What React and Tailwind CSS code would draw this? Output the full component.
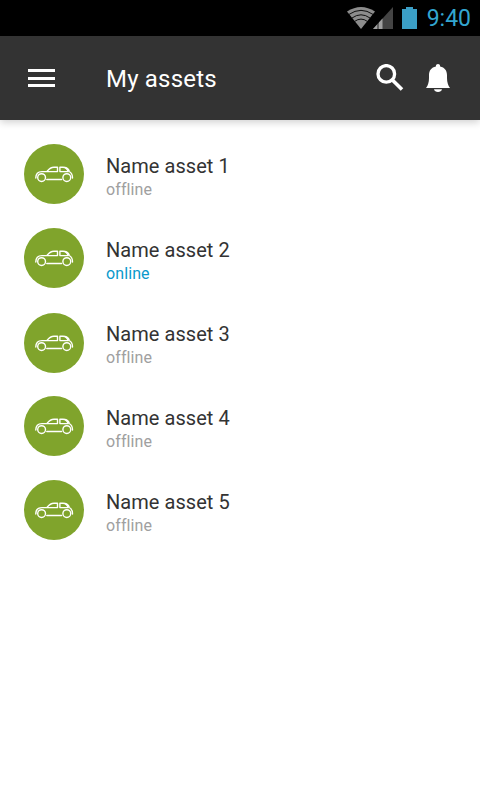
import clsx from 'clsx'

const assets = [
    { id: 1, name: 'Name asset 1', status: 'offline' },
    { id: 2, name: 'Name asset 2', status: 'online' },
    { id: 3, name: 'Name asset 3', status: 'offline' },
    { id: 4, name: 'Name asset 4', status: 'offline' },
    { id: 5, name: 'Name asset 5', status: 'offline' },
];

const App = () => {
    return (
        <div className="w-[480px] h-[800px] bg-white overflow-hidden font-['Roboto',sans-serif]">
            <StatusBar />
            <Header />
            <AssetList />
        </div>
    )
}

const StatusBar = () => {
    return (
        <div className="h-9 bg-black flex items-center justify-end pr-[9px]">
            <WifiIcon />
            <SignalIcon />
            <BatteryIcon />
            <span className="ml-[10px] pt-[2px] text-[23px] leading-[34px] text-[#33a6d0]">9:40</span>
        </div>
    )
}

const Header = () => {
    return (
        <header className="h-[84px] bg-[#333333] flex items-center pl-7 pr-[30px] shadow-[0_2px_8px_rgba(0,0,0,0.2)]">
            <button className="w-[27px] h-[18px] flex flex-col">
                <span className="h-[3px] bg-white" />
                <span className="mt-[5px] h-[3px] bg-white" />
                <span className="mt-[4px] h-[3px] bg-white" />
            </button>
            <h1 className="ml-[51px] pt-[2px] grow text-2xl text-white tracking-[0.2px]">My assets</h1>
            <SearchIcon />
            <BellIcon />
        </header>
    )
}

const AssetList = () => {
    return (
        <ul className="pt-6 px-6 flex flex-col gap-6">
            {assets.map((item) => (<AssetItem key={item.id} item={item} />))}
        </ul>
    )
}

const AssetItem = ({ item }) => {
    return (
        <li className="h-[60px] flex">
            <div className={clsx('size-[60px] rounded-full bg-[#80a42c]', item.id === 3 && 'mt-px')}>
                <CarIcon />
            </div>
            <div className="ml-[22px] pt-[10px]">
                <p className="text-[20px] leading-6 text-[#333333] tracking-[0.05px]">{item.name}</p>
                <p className={clsx('text-[16px] leading-6 tracking-[0.1px] [font-variant-ligatures:none]', item.status === 'online' ? 'text-[#0a99cc]' : 'text-[#a0a0a0]')}>
                    {item.status}
                </p>
            </div>
        </li>
    )
}

const CarIcon = () => {
    return (
        <svg className="size-[60px]" viewBox="0 0 60 60" fill="none" stroke="white" strokeWidth="1.4" strokeLinecap="round" strokeLinejoin="round">
            <circle cx="17.6" cy="33.6" r="3.9" />
            <circle cx="42.8" cy="33.6" r="3.9" />
            <path d="M22.8 35.5H37.6" />
            <path d="M11.8 34C11.8 30 14 27.6 18 27.6H33.5V23.2H30C27 23.2 25 24.8 23.2 27.2" />
            <path d="M35.9 23.2H39C41.6 23.2 43.2 24.6 44.2 27.6H35.9Z" />
            <path d="M41 23.4C43.5 23.8 44.8 25.6 45.3 27.5C47.4 28.6 48.5 30.6 48.5 34" />
        </svg>
    )
}

const SearchIcon = () => {
    return (
        <svg className="w-[28px] h-[28px]" viewBox="0 0 28 28" fill="none" stroke="white">
            <circle cx="10.3" cy="9.9" r="8.3" strokeWidth="3.3" />
            <path d="M16.4 16L26 25.6" strokeWidth="3.6" />
        </svg>
    )
}

const BellIcon = () => {
    return (
        <svg className="ml-[22px] w-6 h-[28px]" viewBox="0 0 24 28" fill="white">
            <path d="M12 0C13.2 0 14.1.9 14.1 2V2.4C18.6 3.2 21 6.5 21 11V14C21 18 22 21.5 24 24H0C2 21.5 3 18 3 14V11C3 6.5 5.4 3.2 9.9 2.4V2C9.9.9 10.8 0 12 0Z" />
            <path d="M8 25.2H16C15.6 27 14 28 12 28S8.4 27 8 25.2Z" />
        </svg>
    )
}

const WifiIcon = () => {
    return (
        <svg className="w-7 h-[22px]" viewBox="0 0 28 22">
            <path d="M0 4.5Q14 -4.5 28 4.5L14 22Z" fill="#8c8c8c" />
            <g fill="none" stroke="black" strokeWidth="0.9">
                <path d="M2 7.4Q14 -0.7 26 7.4" />
                <path d="M5 11Q14 4.6 23 11" />
                <path d="M7.6 14.4Q14 9.8 20.4 14.4" />
            </g>
        </svg>
    )
}

const SignalIcon = () => {
    return (
        <svg className="-ml-[2px] w-5 h-[22px]" viewBox="0 0 20 22">
            <path d="M20 0V22H0Z" fill="#444444" />
            <path d="M9.5 11.55V22H0Z" fill="#a0a0a0" />
            <path d="M5 15V22" stroke="black" strokeWidth="0.8" />
        </svg>
    )
}

const BatteryIcon = () => {
    return (
        <svg className="ml-[9px] w-[15px] h-[22px]" viewBox="0 0 15 22" fill="#3b9fc6">
            <path d="M4 0H11V2H15V22H0V2H4Z" />
        </svg>
    )
}

export default App
